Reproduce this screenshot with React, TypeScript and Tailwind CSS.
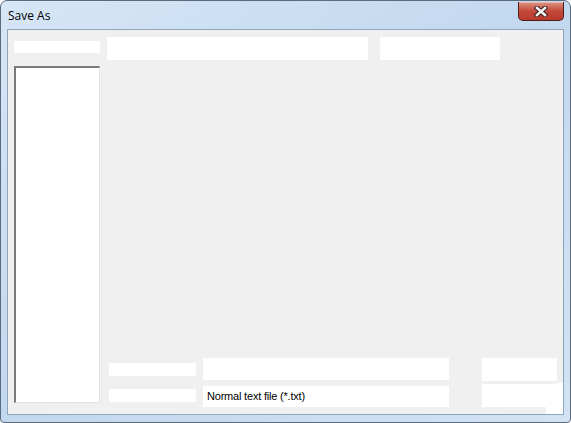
import React from 'react';

function CloseButton() {
  return (
    <div className="w-[46px] h-[19px] mt-px rounded-b-[5px] border border-t-0 border-[#4a1d18] bg-gradient-to-b from-[#dc9384] via-[#c4493a] to-[#b9392b] flex items-center justify-center shadow-[inset_0_1px_0_rgba(255,255,255,0.35)]">
      <svg width="14" height="11" viewBox="0 0 14 11">
        <path d="M3 2 L11 9 M11 2 L3 9" stroke="#3a2424" strokeWidth="4.6" strokeLinecap="square" />
        <path d="M3 2 L11 9 M11 2 L3 9" stroke="#f2f2f2" strokeWidth="2.6" strokeLinecap="square" />
      </svg>
    </div>
  );
}

export default function App() {
  return (
    <div className="w-[571px] h-[423px] rounded-t-[7px] rounded-b-[4px] border border-[#5b6b7c] bg-gradient-to-br from-[#d6e6f6] via-[#c2d8ef] to-[#d2e3f5] flex flex-col overflow-hidden" style={{ fontFamily: '"Liberation Sans", Arial, sans-serif' }}>
      {/* title bar */}
      <div className="h-[28px] flex items-start justify-between pl-[7px] pr-[6px]">
        <span className="mt-[6px] text-[12px] text-black" style={{ fontFamily: '"Open Sans", "Noto Sans", sans-serif' }}>Save As</span>
        <CloseButton />
      </div>

      {/* client area */}
      <div className="ml-[6px] w-[557px] h-[386px] border border-[#8ea5bc] bg-[#f0f0f0] relative flex">
        {/* left column */}
        <div className="ml-[6px] w-[86px] flex flex-col">
          <div className="mt-[11px] h-[12px] bg-white" />
          <div className="mt-[13px] h-[337px] bg-white border-l-2 border-t-2 border-[#7a7a7a] border-r border-b border-r-[#e3e3e3] border-b-[#e3e3e3]" />
        </div>

        {/* right area */}
        <div className="ml-[7px] flex-1 flex flex-col">
          <div className="mt-[7px] flex">
            <div className="w-[261px] h-[23px] bg-white" />
            <div className="ml-[12px] w-[120px] h-[23px] bg-white" />
          </div>
          <div className="flex-1" />
          <div className="flex items-start">
            <div className="ml-[2px] mt-[5px] w-[87px] h-[13px] bg-white" />
            <div className="ml-[7px] w-[246px] h-[22px] bg-white" />
            <div className="ml-[33px] w-[75px] h-[23px] bg-white" />
          </div>
          <div className="mt-[5px] mb-[7px] flex items-start">
            <div className="ml-[2px] mt-[3px] w-[87px] h-[13px] bg-white" />
            <div className="ml-[7px] w-[246px] h-[21px] bg-white flex items-center pl-[4px] text-[11px] tracking-[-0.2px] text-black">
              Normal text file (*.txt)
            </div>
            <div className="ml-[33px] mt-[-2px] w-[75px] h-[23px] bg-white" />
          </div>
        </div>

        {/* size grip */}
        <div className="absolute right-0 bottom-0 w-[6px] h-[31px] bg-white" />
        <div className="absolute right-0 bottom-0 w-[17px] h-[7px] bg-white" />
      </div>
    </div>
  );
}
